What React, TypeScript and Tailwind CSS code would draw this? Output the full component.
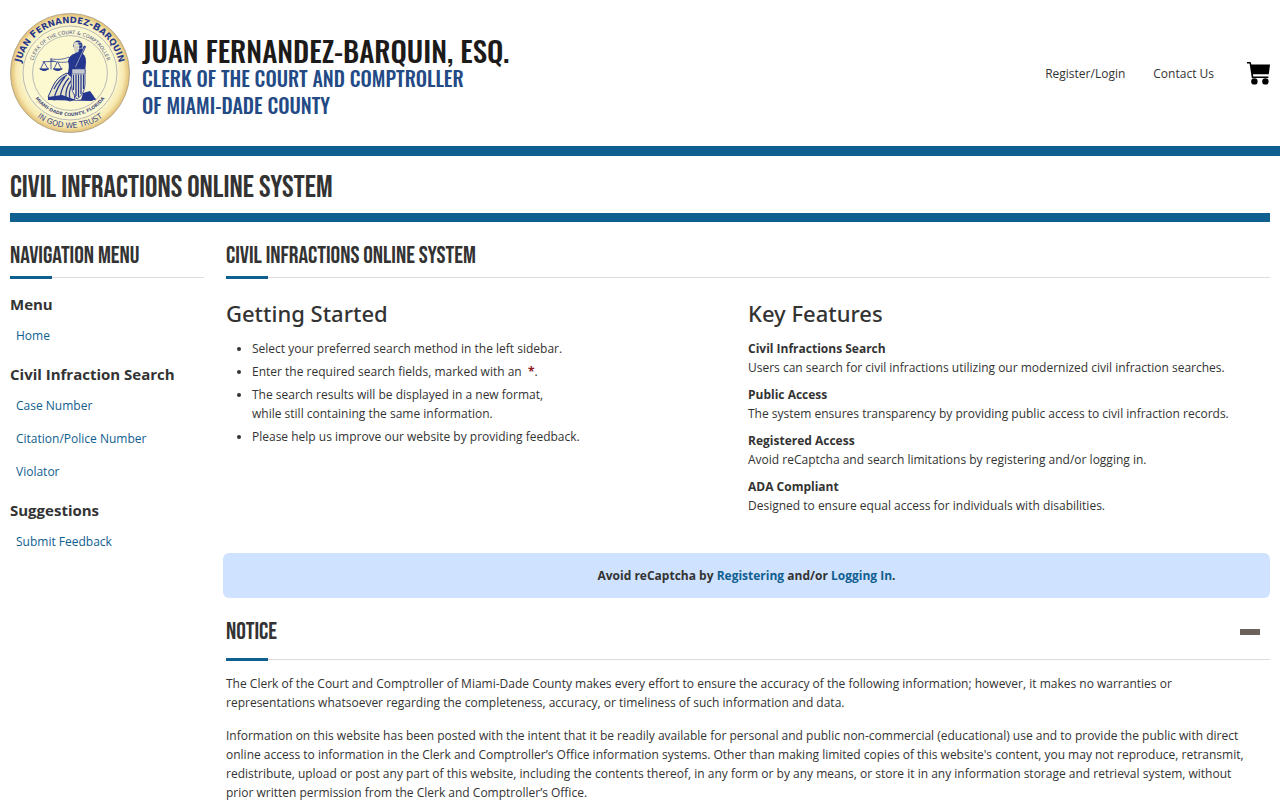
import { type ReactNode } from "react";

type NavGroup = {
  title: string;
  links: string[];
};

type Feature = {
  title: string;
  description: string;
};

const navGroups: NavGroup[] = [
  { title: "Menu", links: ["Home"] },
  {
    title: "Civil Infraction Search",
    links: ["Case Number", "Citation/Police Number", "Violator"],
  },
  { title: "Suggestions", links: ["Submit Feedback"] },
];

const features: Feature[] = [
  {
    title: "Civil Infractions Search",
    description:
      "Users can search for civil infractions utilizing our modernized civil infraction searches.",
  },
  {
    title: "Public Access",
    description:
      "The system ensures transparency by providing public access to civil infraction records.",
  },
  {
    title: "Registered Access",
    description:
      "Avoid reCaptcha and search limitations by registering and/or logging in.",
  },
  {
    title: "ADA Compliant",
    description:
      "Designed to ensure equal access for individuals with disabilities.",
  },
];

const Seal = () => (
  <svg viewBox="0 0 120 120" className="size-[120px] shrink-0" role="img" aria-label="Clerk seal">
    <defs>
      <radialGradient id="rim">
        <stop offset="0.78" stopColor="#fbf7cf" />
        <stop offset="0.9" stopColor="#f7e9b0" />
        <stop offset="1" stopColor="#e0bd72" />
      </radialGradient>
      <path id="arc-name" d="M10 66 V60 A50 50 0 0 1 110 60 V66" />
      <path id="arc-clerk" d="M21 60 A39 39 0 0 1 99 60" />
      <path id="arc-county" d="M17 60 A43 43 0 0 0 103 60" />
      <path id="arc-trust" d="M5 60 A55 55 0 0 0 115 60" />
    </defs>
    <circle cx="60" cy="60" r="59.6" fill="url(#rim)" stroke="#a39a86" strokeWidth="0.7" />
    <circle cx="60" cy="60" r="47" fill="#fbf8d2" stroke="#8d90a0" strokeWidth="0.6" />
    <circle cx="60" cy="60" r="37.4" fill="#fcf9d0" stroke="#8d90a0" strokeWidth="0.6" />

    <g fill="#2a3a8c" fontFamily="'DejaVu Sans', sans-serif" textAnchor="middle">
      <text fontSize="9.6" fontWeight="700">
        <textPath href="#arc-name" startOffset="50%">
          J<tspan fontSize="8.6">UAN</tspan> F<tspan fontSize="8.6">ERNANDEZ</tspan>-B
          <tspan fontSize="8.6">ARQUIN</tspan>
        </textPath>
      </text>
      <text fontSize="4.9" fill="#4b5480">
        <textPath href="#arc-clerk" startOffset="50%">
          CLERK OF THE COURT &amp; COMPTROLLER
        </textPath>
      </text>
      <text fontSize="4.6" fontWeight="700" fill="#4b5480">
        <textPath href="#arc-county" startOffset="50%">
          MIAMI-DADE COUNTY, FLORIDA
        </textPath>
      </text>
      <text fontSize="7.6" fill="#3a4685">
        <textPath href="#arc-trust" startOffset="50%">
          IN GOD WE TRUST
        </textPath>
      </text>
    </g>

    {/* scales */}
    <g fill="none" stroke="#26378f" strokeWidth="0.8" strokeLinecap="round">
      <path d="M33 48.8 L49.5 48.2 M41 45.5 V56 M34 49 L30.5 56 M34 49 L38 56 M47.5 48.5 L44 56 M47.5 48.5 L51.5 56" />
      <path d="M30 56 Q34 59.5 38.5 56 Z M43.5 56 Q47.5 59.5 52 56 Z" fill="#26378f" />
    </g>
    {/* seated figure */}
    <path
      d="M59 44 Q52 47.5 41 46 L41 47.5 Q52 51 61 48 Z"
      fill="#fcf9d0"
      stroke="#26378f"
      strokeWidth="0.7"
    />
    <path
      d="M63 33 Q64 27 69 27.5 Q74 30 72 36 L73 41 Q76 43 76 49 L75 60 L70 65 L61 67 L57 62 Q60 55 58 48 Q59 42 65 40.5 L65.5 37 Z"
      fill="#26378f"
    />
    <path d="M63.5 31 Q64 28.5 67.5 29 L69.5 33 L68.5 39 L65 40 L64 36.5 Z" fill="#d5d3c4" />
    <path d="M65 30 L71 29.5 M64.5 32.5 L71.5 32 M68 36 L72 35" stroke="#fcf9d0" strokeWidth="0.5" />
    <path
      d="M57 60 Q47 64 43 73 L38 84 L44 87 L52 85 L60 88 L65 86 Q62 76 64 66 Z"
      fill="#e6e5c8"
      stroke="#26378f"
      strokeWidth="1"
    />
    <path
      d="M55 64 Q48 72 44 85 M59 65 Q52 72 50 85 M61 68 Q55 75 56 86 M62 72 Q58 79 60 86 M57 62 Q49 66 44 76"
      fill="none"
      stroke="#26378f"
      strokeWidth="1.2"
    />
    <path d="M38 84 L52 82 L66 87 L86 85 L82 88 L38 87 Z M73 80 L80 78 Q84 83 86 87 L71 87 Z" fill="#26378f" />
    <path d="M62 57 Q68 54.5 75 57 V72 Q74 82 67 86 Q61 79 61 70 Z" fill="#f1efd0" stroke="#26378f" strokeWidth="0.8" />
    <path d="M63.5 62 V77 M66 61.5 V83 M68.5 61.5 V84 M71 61.5 V81 M73.5 61.5 V76" stroke="#26378f" strokeWidth="1.3" />
    <path d="M75 33 L65 55" stroke="#26378f" strokeWidth="2.4" />
    <path d="M74.5 34.5 L65.5 54" stroke="#a9adc0" strokeWidth="0.8" />
    <path d="M62 56 L75 56 V61 L62 61 Z" fill="#c3c8cf" stroke="#26378f" strokeWidth="0.5" />
  </svg>
);

const CartIcon = () => (
  <svg viewBox="0 0 24 24" className="size-6" fill="#000" aria-hidden="true">
    <path d="M1 1 H4.6 L5.4 3.6 H24 L22.8 13.2 H7 L7.2 15.4 H22.4 V17 H5.8 L3.6 2.6 H1 Z" />
    <circle cx="8.4" cy="20.4" r="3.2" />
    <circle cx="19.4" cy="20.4" r="3.2" />
  </svg>
);

const SectionHeading = ({
  children,
  action,
}: {
  children: ReactNode;
  action?: ReactNode;
}) => (
  <div>
    <div className="flex items-center justify-between pb-1">
      <h2 className="font-['Bebas_Neue',Oswald,sans-serif] text-[24px] leading-8">
        {children}
      </h2>
      {action}
    </div>
    <div className="flex items-center">
      <div className="h-[3px] w-[42px] bg-[#0f6090]" />
      <div className="h-px flex-1 bg-[#dcdcdc]" />
    </div>
  </div>
);

const Header = () => (
  <header className="flex items-center justify-between border-b-10 border-[#0f6090] px-[10px] py-[13px]">
    <a href="#" className="flex items-center gap-3">
      <Seal />
      <div className="pt-2 font-[Oswald,'Bebas_Neue',sans-serif] font-medium text-[#244a86]">
        <p className="text-[29px] leading-[30px] text-[#1d1b1a]">
          JUAN FERNANDEZ-BARQUIN, ESQ.
        </p>
        <p className="text-[20px] leading-[27px]">
          CLERK OF THE COURT AND COMPTROLLER
        </p>
        <p className="text-[20px] leading-[27px]">OF MIAMI-DADE COUNTY</p>
      </div>
    </a>
    <nav className="flex items-center">
      <a href="#" className="mr-7">
        Register/Login
      </a>
      <a href="#" className="mr-8">
        Contact Us
      </a>
      <a href="#" aria-label="Shopping cart">
        <CartIcon />
      </a>
    </nav>
  </header>
);

const Sidebar = () => (
  <aside className="w-[194px] shrink-0">
    <SectionHeading>NAVIGATION MENU</SectionHeading>
    <nav className="pt-[13px]">
      {navGroups.map((group) => (
        <div key={group.title} className="pb-[7px]">
          <h3 className="text-[15px] leading-6 font-bold">{group.title}</h3>
          <ul className="py-[3px]">
            {group.links.map((link) => (
              <li key={link} className="px-[6px] py-[7px]">
                <a href="#" className="block text-[#0f6090]">
                  {link}
                </a>
              </li>
            ))}
          </ul>
        </div>
      ))}
    </nav>
  </aside>
);

const Notice = () => (
  <section className="pt-3">
    <SectionHeading
      action={
        <button type="button" aria-label="Collapse notice" className="px-[10px] py-[19px]">
          <span className="block h-[6px] w-5 bg-[#6b625b]" />
        </button>
      }
    >
      NOTICE
    </SectionHeading>
    <p className="pt-[13px]">
      The Clerk of the Court and Comptroller of Miami-Dade County makes every
      effort to ensure the accuracy of the following information; however, it
      makes no warranties or
      <br className="max-lg:hidden" /> representations whatsoever regarding the
      completeness, accuracy, or timeliness of such information and data.
    </p>
    <p className="pt-[14px]">
      Information on this website has been posted with the intent that it be
      readily available for personal and public non-commercial (educational)
      use and to provide the public with direct
      <br className="max-lg:hidden" /> online access to information in the Clerk
      and Comptroller’s Office information systems. Other than making limited
      copies of this website's content, you may not reproduce, retransmit,
      <br className="max-lg:hidden" /> redistribute, upload or post any part of
      this website, including the contents thereof, in any form or by any means,
      or store it in any information storage and retrieval system, without
      <br className="max-lg:hidden" /> prior written permission from the Clerk
      and Comptroller’s Office.
    </p>
  </section>
);

const App = () => {
  return (
    <div className="bg-white font-['Open_Sans','Noto_Sans',sans-serif] text-[12px] leading-[19px] text-[#333]">
      <Header />
      <div className="px-[10px]">
        <h1 className="border-b-9 border-[#0f6090] pt-3 pb-[5px] font-['Bebas_Neue',Oswald,sans-serif] text-[31px] leading-10">
          CIVIL INFRACTIONS ONLINE SYSTEM
        </h1>
        <div className="flex gap-[22px] pt-[18px]">
          <Sidebar />
          <main className="min-w-0 flex-1">
            <SectionHeading>CIVIL INFRACTIONS ONLINE SYSTEM</SectionHeading>
            <div className="grid grid-cols-2 pt-5">
              <section>
                <h2 className="font-['Noto_Sans','Open_Sans',sans-serif] text-[22px] leading-7 font-medium">
                  Getting Started
                </h2>
                <ul className="list-disc space-y-1 pt-3 pl-[26px]">
                  <li>Select your preferred search method in the left sidebar.</li>
                  <li>
                    Enter the required search fields, marked with an&nbsp;{" "}
                    <span className="font-bold text-[#8b1a1a]">*</span>.
                  </li>
                  <li>
                    The search results will be displayed in a new format,
                    <br />
                    while still containing the same information.
                  </li>
                  <li>
                    Please help us improve our website by providing feedback.
                  </li>
                </ul>
              </section>
              <section>
                <h2 className="font-['Noto_Sans','Open_Sans',sans-serif] text-[22px] leading-7 font-medium">
                  Key Features
                </h2>
                <dl className="space-y-2 pt-3">
                  {features.map((feature) => (
                    <div key={feature.title}>
                      <dt className="font-bold">{feature.title}</dt>
                      <dd>{feature.description}</dd>
                    </div>
                  ))}
                </dl>
              </section>
            </div>
            <p className="mt-[38px] -ml-[3px] rounded-md bg-[#cfe2ff] py-[13px] text-center font-bold">
              Avoid reCaptcha by{" "}
              <a href="#" className="text-[#0f6090]">
                Registering
              </a>{" "}
              and/or{" "}
              <a href="#" className="text-[#0f6090]">
                Logging In
              </a>
              .
            </p>
            <Notice />
          </main>
        </div>
      </div>
    </div>
  );
};

export default App;
